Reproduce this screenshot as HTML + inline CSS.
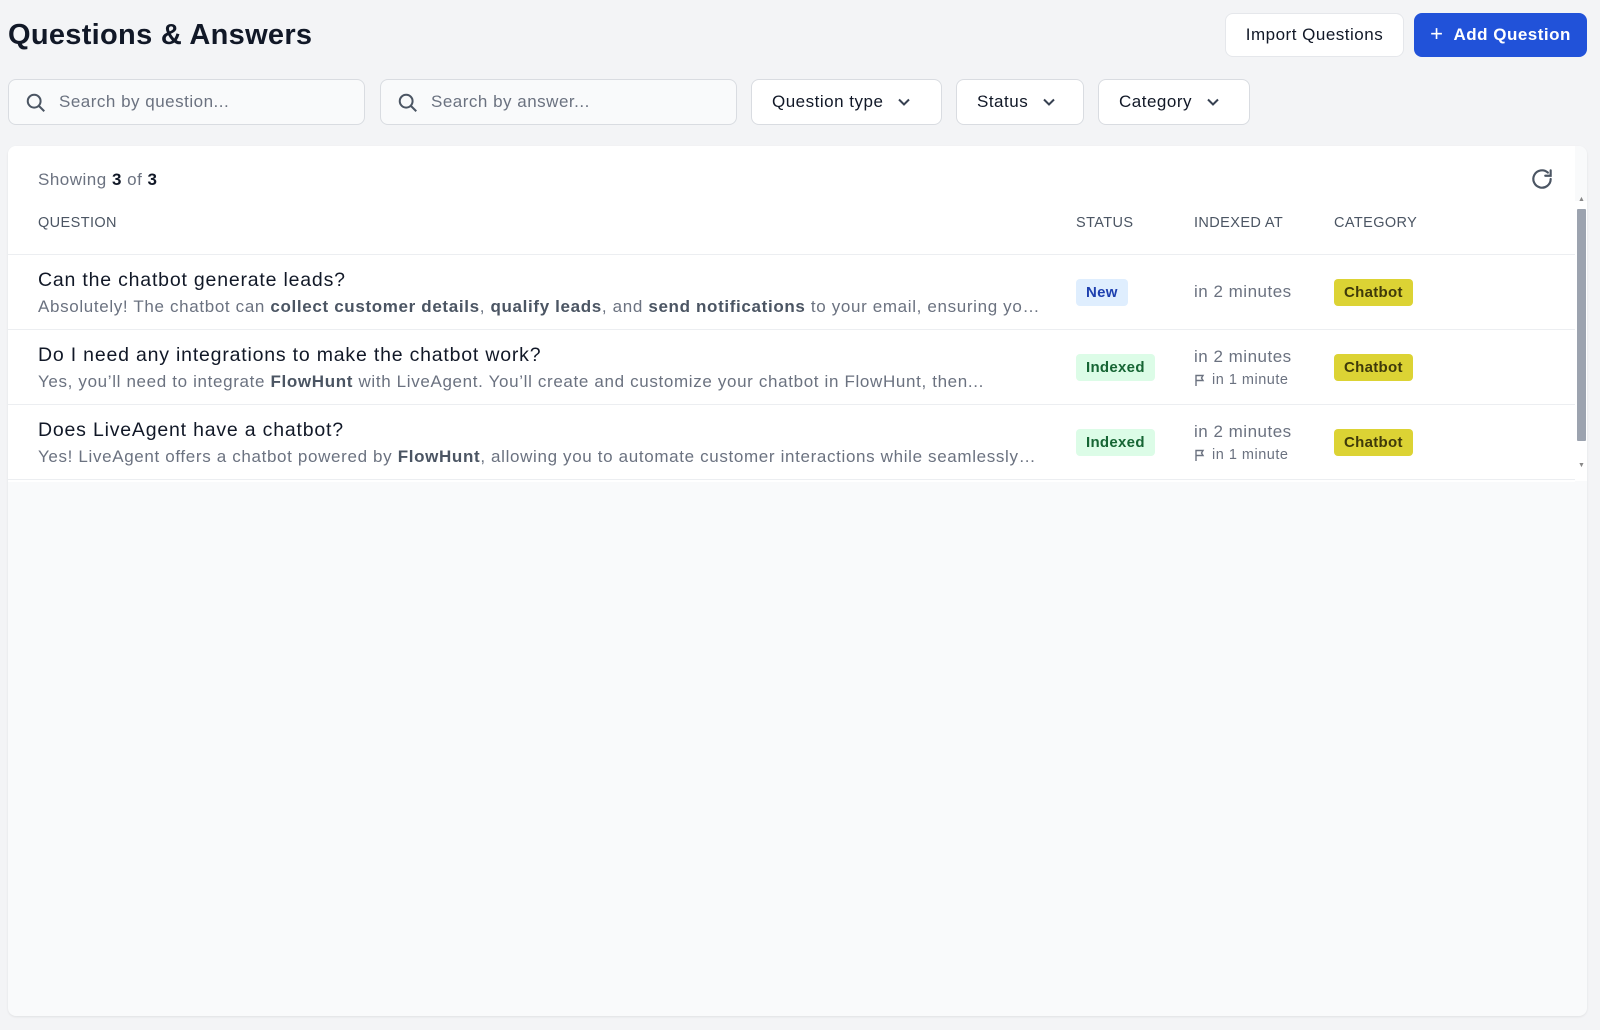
<!DOCTYPE html>
<html><head><meta charset="utf-8"><style>
*{box-sizing:border-box;margin:0;padding:0}
body{width:1600px;height:1030px;background:#f3f4f6;font-family:"Liberation Sans",sans-serif;color:#111827;position:relative;overflow:hidden;letter-spacing:0.5px}
.abs{position:absolute}
h1{position:absolute;left:8px;top:19px;font-size:29px;font-weight:bold;color:#111827;letter-spacing:0.3px}
.btn{position:absolute;top:13px;height:44px;border-radius:8px;font-size:17px;display:flex;align-items:center;justify-content:center}
.imp{left:1225px;width:179px;background:#fff;border:1px solid #e5e7eb;color:#111827}
.add{left:1414px;width:173px;background:#2152d9;color:#fff;font-weight:bold}
.inp{position:absolute;top:79px;height:46px;background:#f9fafb;border:1px solid #d9dce1;border-radius:8px;font-size:17px;color:#6b7280;display:flex;align-items:center;padding-left:50px}
.inp svg{position:absolute;left:16px;top:12px}
.dd{position:absolute;top:79px;height:46px;background:#fff;border:1px solid #d9dce1;border-radius:8px;font-size:17px;color:#111827;display:flex;align-items:center;padding-left:20px}
.dd svg{margin-left:14px}
.card{position:absolute;left:8px;top:146px;width:1579px;height:870px;background:#f9fafb;border-radius:8px;box-shadow:0 1px 2px rgba(0,0,0,.08);overflow:hidden}
.top{position:absolute;left:0;top:0;width:1567px;height:336px;background:#fff}
.th{position:absolute;top:69px;font-size:14.5px;color:#4b5563;letter-spacing:.4px}
.row{position:absolute;left:0;width:1567px;height:75px;border-top:1px solid #eceef1}
.q{position:absolute;left:30px;top:14px;font-size:19.5px;color:#111827;letter-spacing:0.8px}
.a{position:absolute;left:30px;top:42px;font-size:17px;color:#6b7280;white-space:nowrap;width:1002px;overflow:hidden;text-overflow:ellipsis;letter-spacing:0.65px}
.a b{color:#4b5563}
.badge{position:absolute;height:27px;border-radius:4px;font-size:15px;font-weight:bold;display:flex;align-items:center;padding:0 10px;top:24px;letter-spacing:0.3px}
.new{left:1068px;background:#dfeefe;color:#1e40af}
.idx{left:1068px;background:#dcfce7;color:#166534}
.cat{left:1326px;background:#dcd334;color:#3f3a0a}
.t1{position:absolute;left:1186px;font-size:17px;color:#6b7280}
.t2{position:absolute;left:1186px;top:42px;font-size:14.5px;color:#6b7280;display:flex;align-items:center;gap:6px}
</style></head><body>
<h1>Questions &amp; Answers</h1>
<div class="btn imp">Import Questions</div>
<div class="btn add"><span style="font-weight:normal;font-size:22px;margin-right:10px;margin-top:-2px">+</span>Add Question</div>

<div class="inp" style="left:8px;width:357px"><svg width="22" height="22" viewBox="0 0 24 24" fill="none" stroke="#4b5563" stroke-width="2.2"><circle cx="10" cy="10" r="7"/><path d="M15 15l6 6"/></svg>Search by question...</div>
<div class="inp" style="left:380px;width:357px"><svg width="22" height="22" viewBox="0 0 24 24" fill="none" stroke="#4b5563" stroke-width="2.2"><circle cx="10" cy="10" r="7"/><path d="M15 15l6 6"/></svg>Search by answer...</div>
<div class="dd" style="left:751px;width:191px">Question type<svg width="14" height="14" viewBox="0 0 14 14" fill="none" stroke="#374151" stroke-width="2"><path d="M2 4.5l5 5 5-5"/></svg></div>
<div class="dd" style="left:956px;width:128px">Status<svg width="14" height="14" viewBox="0 0 14 14" fill="none" stroke="#374151" stroke-width="2"><path d="M2 4.5l5 5 5-5"/></svg></div>
<div class="dd" style="left:1098px;width:152px">Category<svg width="14" height="14" viewBox="0 0 14 14" fill="none" stroke="#374151" stroke-width="2"><path d="M2 4.5l5 5 5-5"/></svg></div>

<div class="card">
<div class="top"></div>
<div class="abs" style="left:30px;top:24px;font-size:17px;color:#6b7280">Showing <b style="color:#111827">3</b> of <b style="color:#111827">3</b></div>
<svg class="abs" style="left:1521px;top:20px" width="26" height="26" viewBox="0 0 24 24" fill="none" stroke="#4b5563" stroke-width="2" stroke-linecap="round"><path d="M20 12a8 8 0 1 1-2.6-5.9"/><path d="M20 4v5h-5"/></svg>
<div class="th" style="left:30px">QUESTION</div>
<div class="th" style="left:1068px">STATUS</div>
<div class="th" style="left:1186px">INDEXED AT</div>
<div class="th" style="left:1326px">CATEGORY</div>

<div class="row" style="top:108px">
<div class="q">Can the chatbot generate leads?</div>
<div class="a">Absolutely! The chatbot can <b>collect customer details</b>, <b>qualify leads</b>, and <b>send notifications</b> to your email, ensuring you never miss an opportunity.</div>
<div class="badge new">New</div>
<div class="t1" style="top:27px">in 2 minutes</div>
<div class="badge cat">Chatbot</div>
</div>
<div class="row" style="top:183px">
<div class="q">Do I need any integrations to make the chatbot work?</div>
<div class="a">Yes, you’ll need to integrate <b>FlowHunt</b> with LiveAgent. You’ll create and customize your chatbot in FlowHunt, then...</div>
<div class="badge idx">Indexed</div>
<div class="t1" style="top:17px">in 2 minutes</div>
<div class="t2"><svg width="12" height="13" viewBox="0 0 12 13" fill="none" stroke="#6b7280" stroke-width="1.4"><path d="M2 12V1.5h7l-1.5 2.5L9 6.5H2"/></svg>in 1 minute</div>
<div class="badge cat">Chatbot</div>
</div>
<div class="row" style="top:258px;border-bottom:1px solid #eceef1;height:76px">
<div class="q">Does LiveAgent have a chatbot?</div>
<div class="a">Yes! LiveAgent offers a chatbot powered by <b>FlowHunt</b>, allowing you to automate customer interactions while seamlessly handing over to agents.</div>
<div class="badge idx">Indexed</div>
<div class="t1" style="top:17px">in 2 minutes</div>
<div class="t2"><svg width="12" height="13" viewBox="0 0 12 13" fill="none" stroke="#6b7280" stroke-width="1.4"><path d="M2 12V1.5h7l-1.5 2.5L9 6.5H2"/></svg>in 1 minute</div>
<div class="badge cat">Chatbot</div>
</div>
<div class="abs" style="left:1567px;top:55px;width:12px;height:280px;background:#fff"></div>
<div class="abs" style="left:1569px;top:63px;width:9px;height:232px;background:#9ca3af;border-radius:1px"></div>
<div class="abs" style="left:1570px;top:50px;font-size:7px;color:#888">▲</div>
<div class="abs" style="left:1570px;top:316px;font-size:7px;color:#888">▼</div>
</div>
</body></html>
